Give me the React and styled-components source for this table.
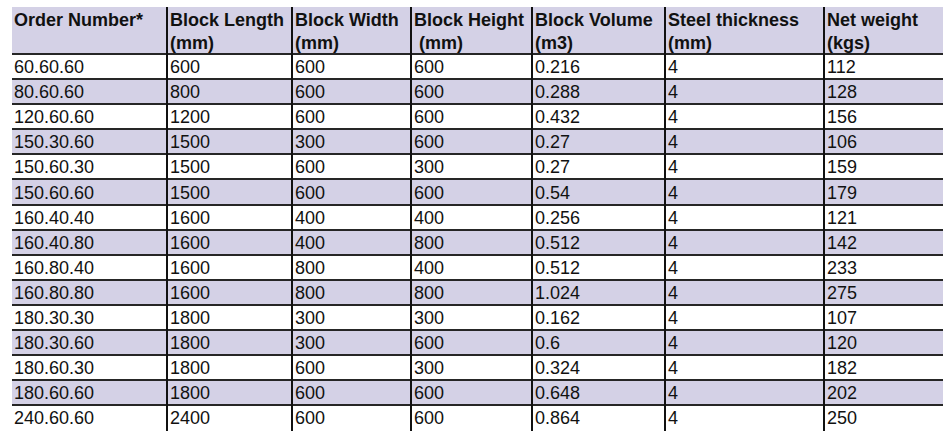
import React from 'react';
import styled, { createGlobalStyle } from 'styled-components';

const GlobalStyle = createGlobalStyle`
  html, body {
    margin: 0;
    padding: 0;
    background: #ffffff;
  }
  body {
    font-family: "Liberation Sans", Arial, sans-serif;
    color: #111;
  }
`;

const Page = styled.div`
  padding: 7px 0 0 12px;
`;

const Table = styled.div`
  width: 931px;
  display: flex;
  flex-direction: column;
`;

const COLS = '154px 125px 119px 121px 133px 159px 120px';

const Row = styled.div`
  display: grid;
  grid-template-columns: ${COLS};
  box-sizing: border-box;
  height: ${(p) => (p.$header ? '48px' : '25.1px')};
  background: ${(p) => (p.$shaded ? '#d4d1e6' : '#ffffff')};
  border-bottom: ${(p) => (p.$last ? 'none' : '2px solid #262626')};
`;

const Cell = styled.div`
  box-sizing: border-box;
  border-left: ${(p) => (p.$first ? 'none' : '2px solid #111')};
  margin-bottom: ${(p) => (p.$last ? '0' : '-2px')};
  position: relative;
  z-index: 1;
  padding: ${(p) => (p.$header ? '2px 0 0 2px' : '0 0 0 2px')};
  font-size: 18px;
  line-height: ${(p) => (p.$header ? '23px' : '23px')};
  font-weight: ${(p) => (p.$header ? 700 : 400)};
  white-space: nowrap;
  overflow: hidden;
  display: ${(p) => (p.$header ? 'block' : 'flex')};
  align-items: center;
`;

const headers = [
  ['Order Number*', ''],
  ['Block Length', '(mm)'],
  ['Block Width', '(mm)'],
  ['Block Height', '\u00a0(mm)'],
  ['Block Volume', '(m3)'],
  ['Steel thickness', '(mm)'],
  ['Net weight', '(kgs)'],
];

const rows = [
  ['60.60.60', '600', '600', '600', '0.216', '4', '112'],
  ['80.60.60', '800', '600', '600', '0.288', '4', '128'],
  ['120.60.60', '1200', '600', '600', '0.432', '4', '156'],
  ['150.30.60', '1500', '300', '600', '0.27', '4', '106'],
  ['150.60.30', '1500', '600', '300', '0.27', '4', '159'],
  ['150.60.60', '1500', '600', '600', '0.54', '4', '179'],
  ['160.40.40', '1600', '400', '400', '0.256', '4', '121'],
  ['160.40.80', '1600', '400', '800', '0.512', '4', '142'],
  ['160.80.40', '1600', '800', '400', '0.512', '4', '233'],
  ['160.80.80', '1600', '800', '800', '1.024', '4', '275'],
  ['180.30.30', '1800', '300', '300', '0.162', '4', '107'],
  ['180.30.60', '1800', '300', '600', '0.6', '4', '120'],
  ['180.60.30', '1800', '600', '300', '0.324', '4', '182'],
  ['180.60.60', '1800', '600', '600', '0.648', '4', '202'],
  ['240.60.60', '2400', '600', '600', '0.864', '4', '250'],
];

export default function App() {
  return (
    <>
      <GlobalStyle />
      <Page>
        <Table>
          <Row $header $shaded>
            {headers.map(([a, b], i) => (
              <Cell key={i} $header $first={i === 0}>
                {a}
                <br />
                {b}
              </Cell>
            ))}
          </Row>
          {rows.map((r, ri) => (
            <Row key={ri} $shaded={ri % 2 === 1} $last={ri === rows.length - 1}>
              {r.map((v, ci) => (
                <Cell key={ci} $first={ci === 0} $last={ri === rows.length - 1}>
                  {v}
                </Cell>
              ))}
            </Row>
          ))}
        </Table>
      </Page>
    </>
  );
}
